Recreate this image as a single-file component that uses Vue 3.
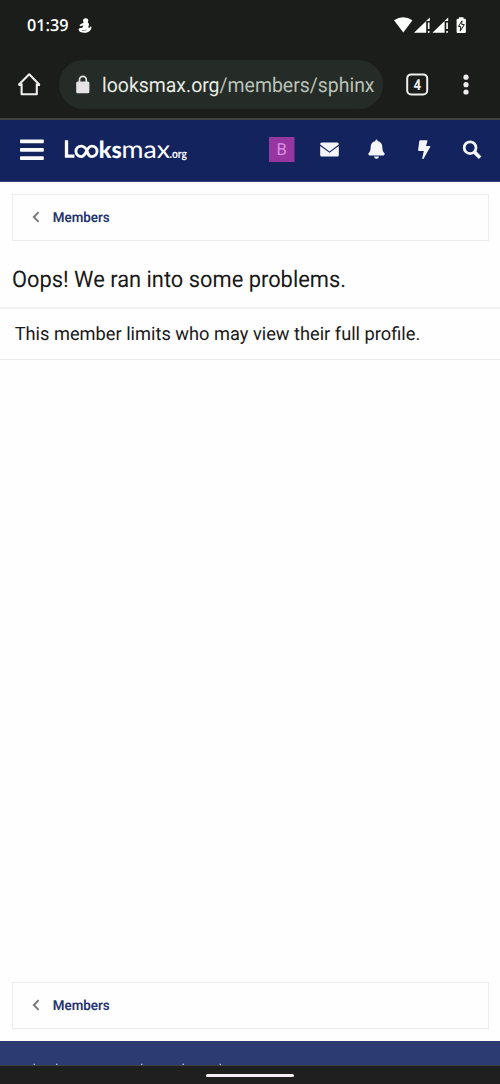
<script setup>
const specks = [33.5, 56, 141, 182.5, 219.5]
</script>

<template>
  <div class="screen">
    <header class="system">
      <svg class="clock" width="51" height="24" viewBox="0 0 51 24"><text x="0" y="18.100" textLength="41.500" lengthAdjust="spacingAndGlyphs">01:39</text></svg>
      <svg class="figure" width="14" height="16" viewBox="0 0 14 16"><path d="M7.600.2c1.900 0 2.900 1.200 2.700 2.600L9.700 4.500c1.500.8 1.600 2.100.9 3.400-.4.900-.2 1.700.4 2.200.6-.2 1-.8 1.200-1.600l1.300.3c-.1 3.600-2.700 6-6.700 6C3.200 14.800.6 13.500.6 11.500c0-1.300 1.500-1.900 3.500-1.500l1.300-2.700-3.200 1-.7-1.200 4.200-2.600-.7-1.700C5 1.400 6 .2 7.600.2z" fill="#fff"/><path d="M4 12.300q2.500.8 4.500-.4" fill="none" stroke="#1b1d1a" stroke-width=".5"/></svg>
      <svg class="signals" width="76" height="20" viewBox="392 15 76 20">
        <path d="M394 20.200Q403 14.300 412.500 20.200L403.300 32.500z" fill="#fff"/>
        <path d="M429.800 17.500V21h-3.600v11.800H414zM448.200 17.500V21h-3.600v11.800h-12.200z" fill="#fff"/>
        <path d="M427.900 22.500h1.600v6.500h-1.600zM427.900 31h1.600v1.800h-1.600zM446.300 22.500h1.600v6.500h-1.600zM446.300 31h1.600v1.800h-1.600z" fill="#fff"/>
        <path d="M459 17.200h4.500v1.600h1.400q1 0 1 1v12.100q0 1-1 1h-7.300q-1 0-1-1V19.800q0-1 1-1H459z" fill="#fff"/>
        <path d="M461.900 20.800l-3.500 5.700h2.400l-.6 4.600 4.100-6.500h-2.500z" fill="#fff" stroke="#1b1d1a" stroke-width="1"/>
      </svg>
    </header>
    <div class="browser">
      <svg class="home" width="24" height="24" viewBox="0 0 24 24"><path d="M4.600 11.500V22.300h15.200V11.500M1.500 12.900 12.200 2.300l10.500 10.600M1.500 12.900h3M20 12.900h3" fill="none" stroke="#f0edf1" stroke-width="2.100" stroke-linejoin="round"/></svg>
      <div class="address">
        <svg width="14" height="19" viewBox="0 0 14 19"><path d="M3.500 8V4.700a3.400 3.400 0 0 1 6.800 0V8" fill="none" stroke="#e6e3e7" stroke-width="1.700"/><rect x=".2" y="6.600" width="13.200" height="11.700" rx="1.500" fill="#e6e3e7"/></svg>
        <svg width="280" height="30" viewBox="0 0 280 30"><text class="url" x="0" y="22" textLength="272.500" lengthAdjust="spacingAndGlyphs">looksmax.org<tspan class="path">/members/sphinx</tspan></text></svg>
      </div>
      <svg class="tabs" width="24" height="24" viewBox="0 0 24 24"><rect x="2.200" y="2.400" width="20" height="20" rx="4" fill="none" stroke="#f0edf1" stroke-width="2"/><text x="12.300" y="17.600" textLength="7.500" lengthAdjust="spacingAndGlyphs">4</text></svg>
      <svg class="dots" width="6" height="22" viewBox="0 0 6 22"><g fill="#f0edf1"><circle cx="3" cy="3.200" r="2.600"/><circle cx="3" cy="10.700" r="2.600"/><circle cx="3" cy="18" r="2.600"/></g></svg>
    </div>
    <nav class="nav">
      <svg width="500" height="61" viewBox="0 120 500 61">
        <g fill="#fafafa"><rect x="20" y="139.500" width="23.800" height="3.800" rx=".8"/><rect x="20" y="147.900" width="23.800" height="3.800" rx=".8"/><rect x="20" y="156.200" width="23.800" height="3.800" rx=".8"/></g>
        <g class="brand">
          <path d="M66.500 140.200V156.200H74.500" fill="none" stroke="#fff" stroke-width="3.300"/>
          <path d="M87.600 152C86 148 84 146.100 81.200 146.100A5.200 5.200 0 0 0 81.200 156.600C86.800 156.600 86 146.100 91.800 146.100A5.200 5.200 0 0 1 91.800 156.600C89.500 156.600 88.300 155 87.300 152" fill="none" stroke="#fff" stroke-width="2.900"/>
          <text x="98.700" y="157.800" class="bold" textLength="23" lengthAdjust="spacingAndGlyphs">ks</text>
          <text x="121.500" y="157.800" class="light" textLength="48.500" lengthAdjust="spacingAndGlyphs">max</text>
          <text x="169.500" y="157.800" class="suffix" textLength="17.500" lengthAdjust="spacingAndGlyphs">.org</text>
        </g>
        <rect x="269" y="137" width="25.500" height="25" fill="#9736a0"/>
        <text x="281.600" y="154.700" class="avatar">B</text>
        <g fill="#f5f5f8">
          <path d="M321.600 142.400h15.700q1.500 0 1.500 1.500v.7l-9.300 7-9.300-7v-.7q0-1.500 1.400-1.500z"/>
          <path d="M320.200 146l9.300 6.800 9.300-6.800v9q0 1.600-1.500 1.600h-15.700q-1.400 0-1.400-1.600z"/>
          <path d="M375.500 141v-.5q0-1 1-1t1 1v.5c3 .6 4.800 2.800 4.800 5.800 0 3.800 1 5.300 2 6.300.8.900.3 2.300-.9 2.300h-13.800c-1.200 0-1.700-1.400-.9-2.300 1-1 2-2.500 2-6.300 0-3 1.800-5.200 4.800-5.800zM374 156.500h5q-.3 2.200-2.500 2.200t-2.500-2.200z"/>
          <path d="M420.200 140.200h6.600q.9 0 .6 1l-1.400 4.800h3.500q1.200 0 .7 1.100l-6.500 11.300q-.6.800-1.200.5-.4-.2-.2-1l1.500-6.900h-4.900q-.9 0-.8-.9l1.200-9q.1-.9.900-.9z"/>
        </g>
        <g fill="none" stroke="#f5f5f8"><circle cx="470.100" cy="147.700" r="5.900" stroke-width="2.800"/><path d="M474.500 152.100l5.600 5.600" stroke-width="3.700"/></g>
      </svg>
    </nav>
    <main class="content">
      <div class="crumb"><svg width="8" height="12" viewBox="0 0 8 12"><path d="M6.600 1.200 1.800 6l4.800 4.800" fill="none" stroke="#777" stroke-width="1.900"/></svg><svg width="60" height="20" viewBox="0 0 60 20"><text x="-.3" y="14.700" textLength="57" lengthAdjust="spacingAndGlyphs">Members</text></svg></div>
      <h1><svg width="440" height="36" viewBox="0 0 440 36"><text x="0" y="25.700" textLength="334" lengthAdjust="spacingAndGlyphs">Oops! We ran into some problems.</text></svg></h1>
      <p class="message"><svg width="440" height="28" viewBox="0 0 440 28"><text x="-.3" y="19.200" textLength="405.500" lengthAdjust="spacingAndGlyphs">This member limits who may view their full profile.</text></svg></p>
      <div class="crumb last"><svg width="8" height="12" viewBox="0 0 8 12"><path d="M6.600 1.200 1.800 6l4.800 4.800" fill="none" stroke="#777" stroke-width="1.900"/></svg><svg width="60" height="20" viewBox="0 0 60 20"><text x="-.3" y="14.700" textLength="57" lengthAdjust="spacingAndGlyphs">Members</text></svg></div>
    </main>
    <footer class="footer"><svg width="500" height="24" viewBox="0 0 500 24"><rect v-for="x in specks" :key="x" :x="x" y="22.700" width="1.500" height="1.300" fill="#aeb5ce"/></svg></footer>
    <div class="gesture"><span></span></div>
  </div>
</template>

<style>
body { margin: 0; background: #fefefe; }
</style>
<style scoped>
* { box-sizing: border-box; }
svg { display: block; flex: none; overflow: visible; }
text { text-rendering: geometricPrecision; }
.screen { width: 500px; height: 1084px; overflow: hidden; display: flex; flex-direction: column; font-family: Roboto, "Liberation Sans", sans-serif; background: #fefefe; }
.system { height: 50px; flex: none; display: flex; background: #1b1d1a; padding: 0 32px 0 27px; }
.clock { margin-top: 13px; fill: #fff; font-family: "Open Sans", sans-serif; font-size: 16.5px; font-weight: 600; }
.figure { margin-top: 18px; }
.signals { margin: 15px 0 0 auto; }
.browser { height: 70px; flex: none; display: flex; align-items: flex-start; background: #1b1d1a; border-bottom: 2px solid #3d423d; }
.home { margin: 22px 0 0 17px; }
.address { margin: 10px 0 0 18px; width: 324px; height: 49px; border-radius: 25px; background: #252b26; display: flex; align-items: center; padding-left: 17px; gap: 12px; }
.url { font-size: 20.3px; fill: #e5ebe4; }
.path { fill: #b9c1b9; }
.tabs { margin: 22px 0 0 22px; }
.tabs text { fill: #f0edf1; font-weight: 700; font-size: 15px; text-anchor: middle; }
.dots { margin: 24px 0 0 34px; }
.nav { height: 62px; flex: none; background: #13235e; border-bottom: 1px solid #384778; }
.brand { font-family: Lato, sans-serif; fill: #fff; }
.bold { font-size: 23.5px; font-weight: 900; }
.light { font-size: 24.5px; font-weight: 400; }
.suffix { font-size: 12px; font-weight: 700; }
.avatar { font-size: 16.5px; fill: #dc8ee4; text-anchor: middle; }
.content { flex: 1; display: flex; flex-direction: column; padding-top: 12px; }
.crumb { margin: 0 11px 0 12px; height: 47px; flex: none; display: flex; align-items: center; gap: 13px; padding: 0 0 2px 19px; border: 1px solid #ededed; fill: #253570; font-size: 13.9px; font-weight: 600; }
.last { margin-top: auto; margin-bottom: 12px; }
h1 { margin: 0; height: 68px; border-bottom: 2px solid #f1f1f1; padding: 20px 12px 0; font-size: 23px; font-weight: 400; fill: #191919; }
.message { margin: 0; height: 51px; border-bottom: 1px solid #ebebeb; padding: 12px 15px 0; font-size: 18.4px; fill: #191919; }
.footer { height: 24px; flex: none; background: #2c3b71; }
.gesture { height: 19px; flex: none; border-top: 1px solid #3d3f44; background: #1f1f1f; padding-top: 8px; }
.gesture span { display: block; width: 88px; height: 3px; margin: 0 auto; border-radius: 2px; background: #f5eff5; }
</style>
